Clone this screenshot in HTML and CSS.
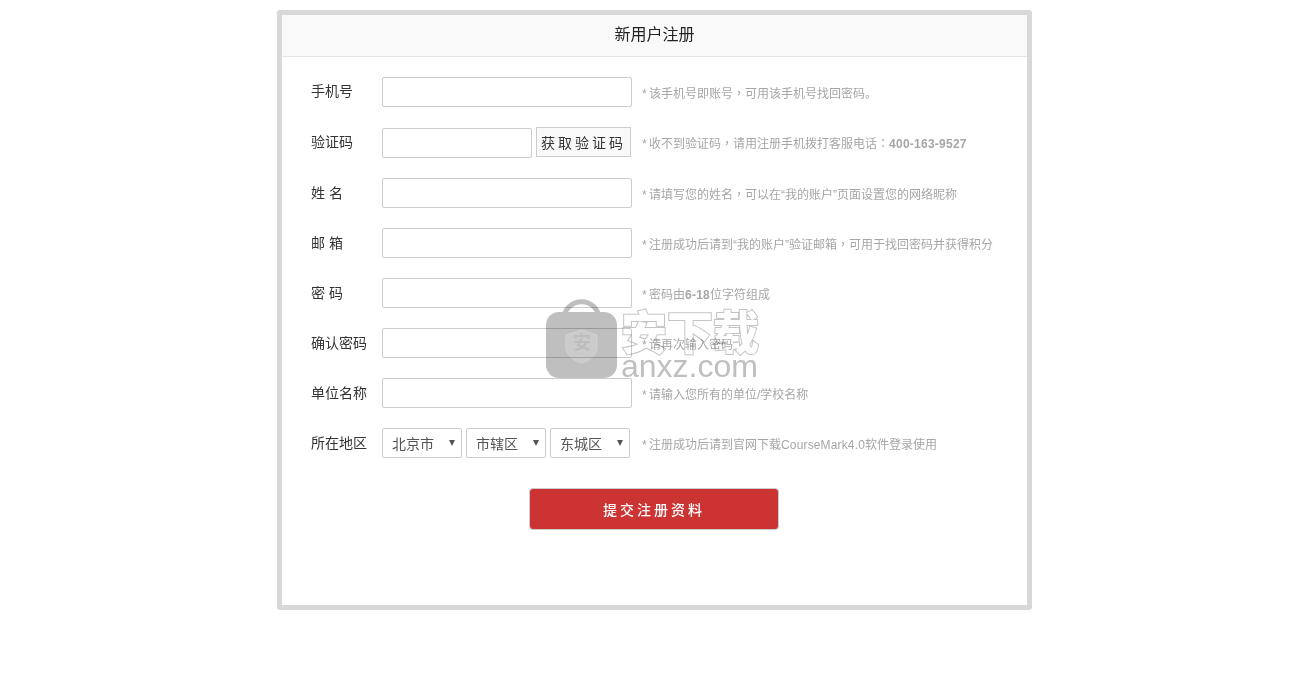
FILE: index.html
```html
<!DOCTYPE html>
<html lang="zh-CN">
  <head>
    <meta charset="UTF-8" />
    <title>新用户注册</title>
    <link rel="stylesheet" href="styles.css">
  </head>
  <body>
    <div class="reg-box">
      <div class="reg-title">新用户注册</div>
      <form class="reg-form">
        <div class="row row-top">
          <label class="row-label">手机号</label>
          <input class="text-input" type="text" />
          <span class="tip">* 该手机号即账号<span class="mid" lang="zh-TW">，</span>可用该手机号找回密码。</span>
        </div>
        <div class="row row-top">
          <label class="row-label">验证码</label>
          <input class="text-input code-input" type="text" />
          <button class="code-btn" type="button">获取验证码</button>
          <span class="tip tip-up">* 收不到验证码<span class="mid" lang="zh-TW">，</span>请用注册手机拨打客服电话<span class="mid" lang="zh-TW">：</span><b>400-163-9527</b></span>
        </div>
        <div class="row">
          <label class="row-label">姓 名</label>
          <input class="text-input" type="text" />
          <span class="tip">* 请填写您的姓名<span class="mid" lang="zh-TW">，</span>可以在“我的账户”页面设置您的网络昵称</span>
        </div>
        <div class="row">
          <label class="row-label">邮 箱</label>
          <input class="text-input" type="text" />
          <span class="tip">* 注册成功后请到“我的账户”验证邮箱<span class="mid" lang="zh-TW">，</span>可用于找回密码并获得积分</span>
        </div>
        <div class="row">
          <label class="row-label">密 码</label>
          <input class="text-input" type="password" />
          <span class="tip">* 密码由<b>6-18</b>位字符组成</span>
        </div>
        <div class="row">
          <label class="row-label">确认密码</label>
          <input class="text-input" type="password" />
          <span class="tip">* 请再次输入密码</span>
        </div>
        <div class="row">
          <label class="row-label">单位名称</label>
          <input class="text-input" type="text" />
          <span class="tip">* 请输入您所有的单位/学校名称</span>
        </div>
        <div class="row">
          <label class="row-label">所在地区</label>
          <div class="area">
            <span class="area-select">北京市</span>
            <span class="area-select">市辖区</span>
            <span class="area-select">东城区</span>
          </div>
          <span class="tip">* 注册成功后请到官网下载<span class="latin">CourseMark4.0</span>软件登录使用</span>
        </div>
        <button class="submit-btn" type="button">提交注册资料</button>
      </form>
    </div>

    <!-- Watermark -->
    <div class="watermark">
      <svg class="wm-icon" width="71" height="81" viewBox="0 0 71 81">
        <path d="M17 24 C18 -3 53 -3 54 24" fill="none" stroke="#bfbfbf" stroke-width="5" />
        <rect x="0" y="14" width="71" height="66" rx="13" fill="#bfbfbf" />
        <path d="M35.5 32 L51 37 V50 C51 58 42 63 35.5 65 C29 63 20 58 20 50 V37 Z" fill="#cbcbcb" stroke="#d2d2d2" stroke-width="1" />
      </svg>
      <span class="wm-badge">安</span>
      <div class="wm-text">
        <div class="wm-cn">安下载</div>
        <div class="wm-en">anxz.com</div>
      </div>
    </div>
  </body>
</html>
```

FILE: styles.css
```css
* {
  margin: 0;
  padding: 0;
  box-sizing: border-box;
}

body {
  background: #fff;
  font-family: "Liberation Sans", "Noto Sans CJK SC", sans-serif;
  padding-top: 10px;
  height: 680px;
  overflow: hidden;
  position: relative;
}

.reg-box {
  width: 755px;
  height: 600px;
  margin: 0 auto;
  border: 5px solid #d8d8d8;
  border-radius: 3px;
  position: relative;
  left: 0.5px;
}

.reg-title {
  height: 42px;
  line-height: 40px;
  text-align: center;
  font-size: 16px;
  color: #222;
  background: #f9f9f9;
  border-bottom: 1px solid #e5e5e5;
}

.reg-form {
  padding: 20px 0 0 29px;
}

.row {
  display: flex;
  align-items: center;
  height: 30px;
  margin-bottom: 20px;
}

.row:first-child {
  margin-bottom: 21px;
}

.row-label {
  width: 71px;
  font-size: 14px;
  color: #333;
  position: relative;
  top: -1px;
  white-space: pre;
}

.row-top .row-label {
  top: -2px;
}

.text-input {
  width: 250px;
  height: 30px;
  border: 1px solid #ccc;
  border-radius: 2px;
  background: #fff;
}

.code-input {
  width: 150px;
}

.code-btn {
  width: 95px;
  height: 30px;
  margin-left: 4px;
  margin-top: -1px;
  border: 1px solid #ccc;
  background: #f9f9f9;
  font-family: inherit;
  font-size: 14px;
  letter-spacing: 3px;
  color: #333;
  align-self: flex-start;
}

.tip {
  margin-left: 10px;
  font-size: 12px;
  word-spacing: -1px;
  color: #a6a6a6;
  position: relative;
  white-space: nowrap;
}

.tip-up {
  top: -1px;
}

.mid {
  font-family: "Noto Sans CJK TC", sans-serif;
}

.tip b {
  letter-spacing: 0.25px;
}

.latin {
  letter-spacing: 0.15px;
}

.code-btn + .tip {
  margin-left: 11px;
}

.area {
  display: flex;
  gap: 4px;
  width: 250px;
}

.area-select {
  width: 80px;
  height: 30px;
  line-height: 30px;
  padding-left: 9px;
  border: 1px solid #ccc;
  border-radius: 2px;
  font-size: 14px;
  color: #555;
  position: relative;
}

.area-select::after {
  content: "";
  position: absolute;
  right: 6px;
  top: 11px;
  border-left: 3px solid transparent;
  border-right: 3px solid transparent;
  border-top: 6px solid #555;
}

.submit-btn {
  display: block;
  width: 250px;
  height: 42px;
  margin: 30px 0 0 218px;
  background: #cc3333;
  border: 1px solid #ccc;
  border-radius: 4px;
  color: #fff;
  font-family: inherit;
  font-size: 14px;
  font-weight: 500;
  letter-spacing: 3px;
}

.watermark {
  position: absolute;
  left: 546px;
  top: 298px;
  display: flex;
  gap: 4px;
  mix-blend-mode: multiply;
  pointer-events: none;
}

.wm-badge {
  position: absolute;
  left: 27px;
  top: 36px;
  font-size: 18px;
  line-height: 18px;
  font-weight: bold;
  color: #bdbdbd;
}

.wm-text {
  margin-top: 10px;
  color: #bfbfbf;
}

.wm-cn {
  font-size: 46px;
  line-height: 50px;
  font-weight: 900;
  color: #fff;
  -webkit-text-stroke: 2px #c4c4c4;
  paint-order: stroke fill;
}

.wm-en {
  font-size: 32px;
  line-height: 16px;
}
```
